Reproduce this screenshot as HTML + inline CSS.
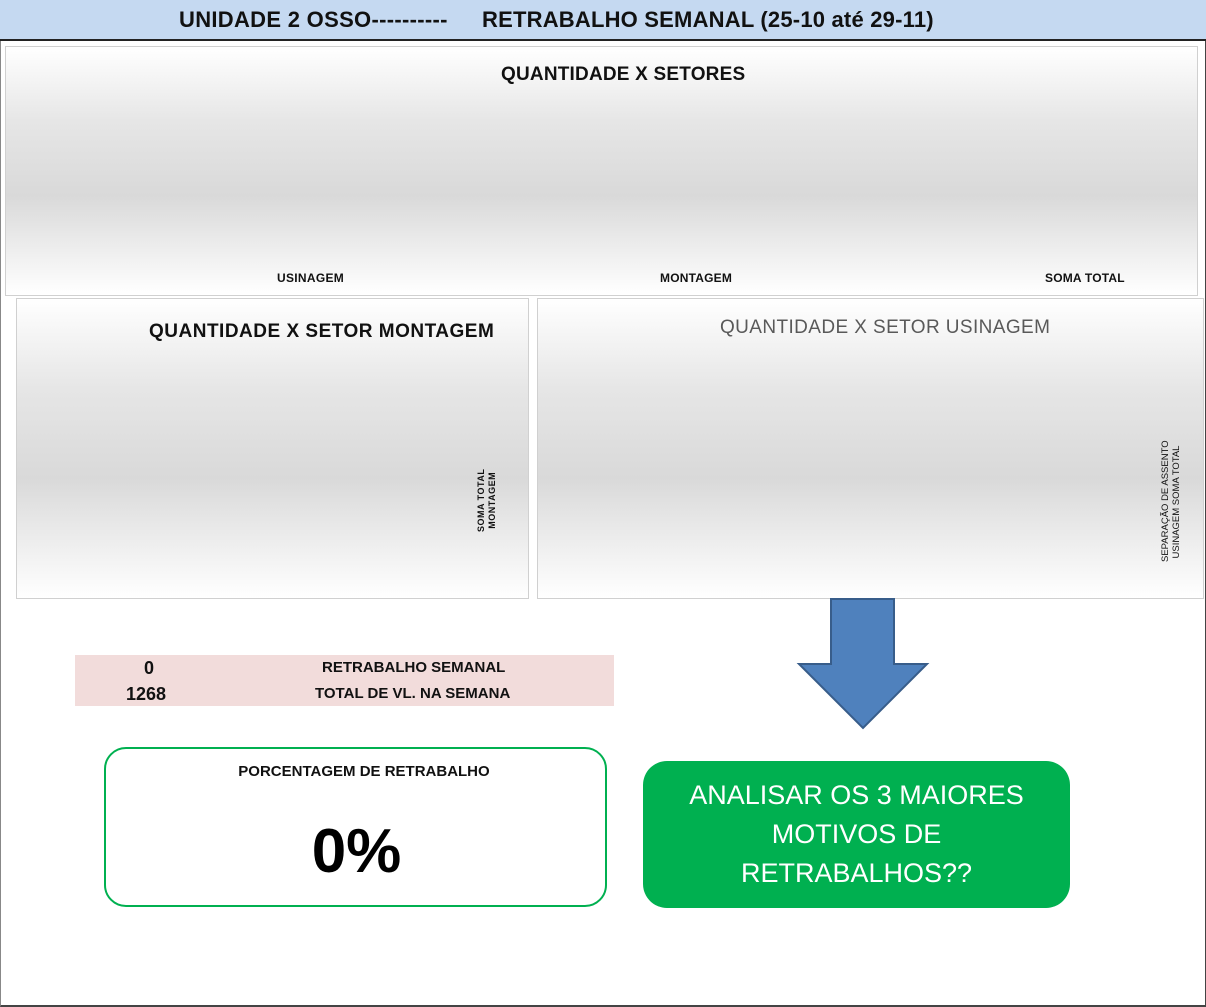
<!DOCTYPE html>
<html><head><meta charset="utf-8"><style>
body{margin:0;width:1206px;height:1007px;background:#fff;position:relative;overflow:hidden;font-family:"Liberation Sans",Arial,sans-serif}
.a{position:absolute;white-space:nowrap}
.hdr{left:0;top:0;width:1206px;height:39px;background:#c5d9f1;border-bottom:2px solid #222;font-weight:bold;font-size:22px;line-height:40px;color:#111}
.ch{background:linear-gradient(#fff 0%,#e6e6e6 30%,#d9d9d9 60%,#fff 100%);border:1px solid #d0d0d0;box-sizing:border-box}
.t{font-weight:bold;color:#111}
</style></head><body>
<div class="a" style="left:0;top:0;width:1204px;height:1005px;border-right:2px solid #444;border-bottom:2px solid #444;border-left:1px solid #888"></div>
<div class="a hdr"><span class="a" style="left:179px;letter-spacing:0.3px">UNIDADE 2 OSSO----------</span><span class="a" style="left:482px;letter-spacing:0.2px">RETRABALHO SEMANAL (25-10 até 29-11)</span></div>
<div class="a ch" style="left:5px;top:46px;width:1193px;height:250px"></div>
<div class="a t" style="left:501px;top:64px;font-size:19px;letter-spacing:0.2px">QUANTIDADE X SETORES</div>
<div class="a t" style="left:277px;top:271px;font-size:12px;letter-spacing:0.3px">USINAGEM</div>
<div class="a t" style="left:660px;top:271px;font-size:12px;letter-spacing:0.2px">MONTAGEM</div>
<div class="a t" style="left:1045px;top:271px;font-size:12px;letter-spacing:0.2px">SOMA TOTAL</div>
<div class="a ch" style="left:16px;top:298px;width:513px;height:301px"></div>
<div class="a t" style="left:149px;top:321px;font-size:19px;letter-spacing:0.5px">QUANTIDADE X SETOR MONTAGEM</div>
<div class="a t" style="left:476px;top:532px;font-size:9px;line-height:11px;transform:rotate(-90deg);transform-origin:0 0;text-align:center;letter-spacing:.5px">SOMA TOTAL<br>MONTAGEM</div>
<div class="a ch" style="left:537px;top:298px;width:667px;height:301px"></div>
<div class="a" style="left:720px;top:317px;font-size:19px;color:#595959;letter-spacing:0.4px">QUANTIDADE X SETOR USINAGEM</div>
<div class="a" style="left:1160px;top:562px;font-size:9.5px;line-height:11px;transform:rotate(-90deg);transform-origin:0 0;text-align:center;color:#111;width:120px">SEPARAÇÃO DE ASSENTO<br>USINAGEM SOMA TOTAL</div>
<svg class="a" style="left:796px;top:598px" width="136" height="134"><path d="M35 1H98V66H131L67 130L3 66H35Z" fill="#4f81bd" stroke="#385d8a" stroke-width="2"/></svg>
<div class="a" style="left:75px;top:655px;width:539px;height:51px;background:#f2dcdb"></div>
<div class="a t" style="left:144px;top:658px;font-size:18px">0</div>
<div class="a t" style="left:126px;top:684px;font-size:18px">1268</div>
<div class="a t" style="left:322px;top:659px;font-size:15px">RETRABALHO SEMANAL</div>
<div class="a t" style="left:315px;top:685px;font-size:15px">TOTAL DE VL. NA SEMANA</div>
<div class="a" style="left:104px;top:747px;width:503px;height:160px;border:2px solid #00b050;border-radius:22px;box-sizing:border-box"></div>
<div class="a t" style="left:104px;top:763px;width:520px;text-align:center;font-size:15px">PORCENTAGEM DE RETRABALHO</div>
<div class="a t" style="left:104px;top:816px;width:505px;text-align:center;font-size:62px;color:#000">0%</div>
<div class="a" style="left:643px;top:761px;width:427px;height:147px;background:#00b050;border-radius:24px;color:#fff;font-size:27px;line-height:39px;text-align:center;box-sizing:border-box;padding-top:15px">ANALISAR OS 3 MAIORES<br>MOTIVOS DE<br>RETRABALHOS??</div>
</body></html>
